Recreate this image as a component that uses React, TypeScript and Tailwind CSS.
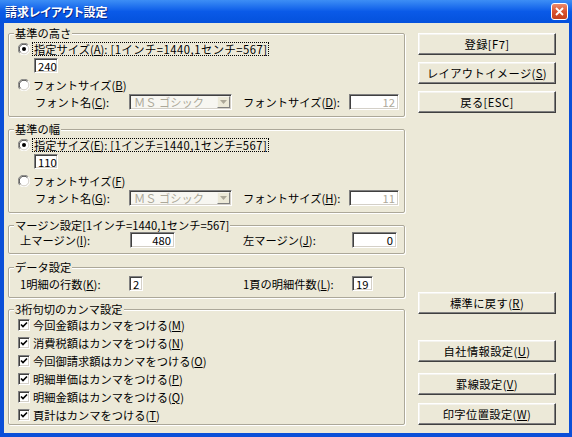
import React from "react";

const U = ({ c }: { c: string }) => <span className="underline underline-offset-[1px]">{c}</span>;

function Radio({ checked }: { checked?: boolean }) {
  return (
    <svg width="12" height="12" viewBox="0 0 12 12" className="shrink-0">
      <circle cx="6" cy="6" r="5.5" fill="#fff" />
      <path d="M1.8 10.2 A5.5 5.5 0 0 1 10.2 1.8" fill="none" stroke="#808080" strokeWidth="1" />
      <path d="M2.6 9.4 A4.5 4.5 0 0 1 9.4 2.6" fill="none" stroke="#404040" strokeWidth="1" />
      <path d="M10.2 1.8 A5.5 5.5 0 0 1 1.8 10.2" fill="none" stroke="#ffffff" strokeWidth="1" />
      <path d="M9.4 2.6 A4.5 4.5 0 0 1 2.6 9.4" fill="none" stroke="#d4d0c8" strokeWidth="1" />
      {checked && <circle cx="6" cy="6" r="2" fill="#000" />}
    </svg>
  );
}

function Check() {
  return (
    <span className="w-[12px] h-[12px] shrink-0 bg-white border border-t-[#808080] border-l-[#808080] border-b-white border-r-white shadow-[inset_1px_1px_0_#404040,inset_-1px_-1px_0_#d4d0c8] flex items-center justify-center">
      <svg width="8" height="8" viewBox="0 0 8 8">
        <path d="M1 3.5 L3 5.5 L7 1.5" fill="none" stroke="#000" strokeWidth="1.6" />
      </svg>
    </span>
  );
}

function Field({ w, v, right, disabled, h = "h-[15px]" }: { w: string; v: string; right?: boolean; disabled?: boolean; h?: string }) {
  return (
    <span
      className={`${w} ${h} shrink-0 flex items-center px-[3px] border border-t-[#808080] border-l-[#808080] border-b-white border-r-white shadow-[inset_1px_1px_0_#404040,inset_-1px_-1px_0_#d4d0c8] ${
        disabled ? "bg-white text-[#aca899]" : "bg-white text-black"
      } ${right ? "justify-end" : "justify-start"}`}
    >
      {v}
    </span>
  );
}

function Combo() {
  return (
    <span className="w-[103px] h-[16px] shrink-0 flex items-center bg-[#f7f6f1] border border-t-[#808080] border-l-[#808080] border-b-white border-r-white shadow-[inset_1px_1px_0_#404040,inset_-1px_-1px_0_#d4d0c8]">
      <span className="flex-1 pl-[4px] text-[#aca899] whitespace-nowrap overflow-hidden">ＭＳ ゴシック</span>
      <span className="w-[13px] h-[12px] mr-[1px] shrink-0 bg-[#ece9d8] border border-t-[#f4f3ee] border-l-[#f4f3ee] border-b-[#808080] border-r-[#808080] flex items-center justify-center">
        <svg width="7" height="4" viewBox="0 0 7 4">
          <path d="M0 0 H7 L3.5 4 Z" fill="#aca899" />
        </svg>
      </span>
    </span>
  );
}

function Group({ title, children, className = "" }: { title: React.ReactNode; children: React.ReactNode; className?: string }) {
  return (
    <fieldset className={`border border-[#aca899] rounded-[2px] shadow-[1px_1px_0_#fff,inset_1px_1px_0_#fff] ${className}`}>
      <legend className="ml-[5px] px-[1px] leading-[14px] bg-[#ece9d8]">{title}</legend>
      {children}
    </fieldset>
  );
}

function Btn({ children, className = "" }: { children: React.ReactNode; className?: string }) {
  return (
    <div
      className={`h-[22px] w-[138px] flex items-center justify-center tracking-[0.4px] bg-[#ece9d8] border border-t-white border-l-white border-b-[#404040] border-r-[#404040] shadow-[inset_-1px_-1px_0_#808080,inset_1px_1px_0_#f4f3ee] ${className}`}
    >
      {children}
    </div>
  );
}

function SizeGroup({ title, a, b, c, d, num, size, className }: { title: string; a: string; b: string; c: string; d: string; num: string; size: string; className?: string }) {
  return (
    <Group title={title} className={`pb-[6px] ${className ?? ""}`}>
      <div className="mt-[2px] h-[14px] flex items-center pl-[9px] gap-[2px]">
        <Radio checked />
        <span className="border border-dotted border-black px-[1px] leading-[12px]">
          指定サイズ(<U c={a} />):<span className="tracking-[0.5px]"> [1インチ=1440,1センチ=567]</span>
        </span>
      </div>
      <div className="mt-[2px] pl-[25px] flex">
        <Field w="w-[24px]" v={num} />
      </div>
      <div className="mt-[5px] h-[14px] flex items-center pl-[9px] gap-[3px]">
        <Radio />
        <span>
          フォントサイズ(<U c={b} />)
        </span>
      </div>
      <div className="mt-[2px] h-[16px] flex items-center pl-[26px]">
        <span className="w-[94px] shrink-0">
          フォント名(<U c={c} />):
        </span>
        <Combo />
        <span className="ml-[11px] w-[106px] shrink-0">
          フォントサイズ(<U c={d} />):
        </span>
        <Field w="w-[50px]" h="h-[16px]" v={size} right disabled />
      </div>
    </Group>
  );
}

export default function App() {
  const checks: [string, string][] = [
    ["今回金額はカンマをつける", "M"],
    ["消費税額はカンマをつける", "N"],
    ["今回御請求額はカンマをつける", "O"],
    ["明細単価はカンマをつける", "P"],
    ["明細金額はカンマをつける", "Q"],
    ["頁計はカンマをつける", "T"],
  ];
  return (
    <div className="w-[572px] h-[437px] flex flex-col bg-[#0b4fd8] font-['Noto_Sans_CJK_JP',sans-serif] text-[11.25px] leading-[14px] text-black overflow-hidden">
      <div className="h-[23px] shrink-0 flex items-center pl-[5px] pr-[4px] bg-gradient-to-b from-[#3d8ef5] via-[#0a5ae8] to-[#0451dc]">
        <span className="flex-1 text-white font-bold text-[12px] [font-feature-settings:'palt'] [text-shadow:1px_1px_0_#0a2a8a]">
          請求レイアウト設定
        </span>
        <span className="w-[17px] h-[17px] rounded-[3px] border border-white bg-gradient-to-b from-[#ec8a6c] via-[#d9532f] to-[#c4401c] flex items-center justify-center">
          <svg width="9" height="9" viewBox="0 0 9 9">
            <path d="M1 1 L8 8 M8 1 L1 8" stroke="#fff" strokeWidth="1.8" />
          </svg>
        </span>
      </div>
      <div className="flex-1 ml-[4px] mr-[3px] mb-[4px] bg-[#ece9d8] flex">
        <div className="pl-[4px] pt-[3px] w-[401px] shrink-0 flex flex-col">
          <SizeGroup title="基準の高さ" a="A" b="B" c="C" d="D" num="240" size="12" />
          <SizeGroup title="基準の幅" a="E" b="F" c="G" d="H" num="110" size="11" className="mt-[5px]" />
          <Group title="マージン設定[1インチ=1440,1センチ=567]" className="mt-[5px] pb-[5px]">
            <div className="h-[16px] flex items-center pl-[11px]">
              <span className="w-[110px] shrink-0">
                上マージン(<U c="I" />):
              </span>
              <Field w="w-[45px]" h="h-[16px]" v="480" right />
              <span className="ml-[68px] w-[109px] shrink-0">
                左マージン(<U c="J" />):
              </span>
              <Field w="w-[45px]" h="h-[16px]" v="0" right />
            </div>
          </Group>
          <Group title="データ設定" className="mt-[6px] pb-[6px]">
            <div className="mt-[2px] h-[15px] flex items-center pl-[11px]">
              <span className="w-[109px] shrink-0">
                1明細の行数(<U c="K" />):
              </span>
              <Field w="w-[14px]" v="2" />
              <span className="ml-[100px] w-[109px] shrink-0">
                1頁の明細件数(<U c="L" />):
              </span>
              <Field w="w-[21px]" v="19" />
            </div>
          </Group>
          <Group title="3桁句切のカンマ設定" className="mt-[4px]">
            {checks.map(([t, k]) => (
              <div key={k} className="h-[18px] flex items-center pl-[9px] gap-[3px]">
                <Check />
                <span>
                  {t}(<U c={k} />)
                </span>
              </div>
            ))}
          </Group>
        </div>
        <div className="ml-[13px] flex flex-col">
          <Btn className="mt-[10px]">登録[F7]</Btn>
          <Btn className="mt-[7px]">
            <span>
              レイアウトイメージ(<U c="S" />)
            </span>
          </Btn>
          <Btn className="mt-[7px]">戻る[ESC]</Btn>
          <Btn className="mt-[179px]">
            <span>
              標準に戻す(<U c="R" />)
            </span>
          </Btn>
          <Btn className="mt-[26px]">
            <span>
              自社情報設定(<U c="U" />)
            </span>
          </Btn>
          <Btn className="mt-[11px]">
            <span>
              罫線設定(<U c="V" />)
            </span>
          </Btn>
          <Btn className="mt-[8px]">
            <span>
              印字位置設定(<U c="W" />)
            </span>
          </Btn>
        </div>
      </div>
    </div>
  );
}
